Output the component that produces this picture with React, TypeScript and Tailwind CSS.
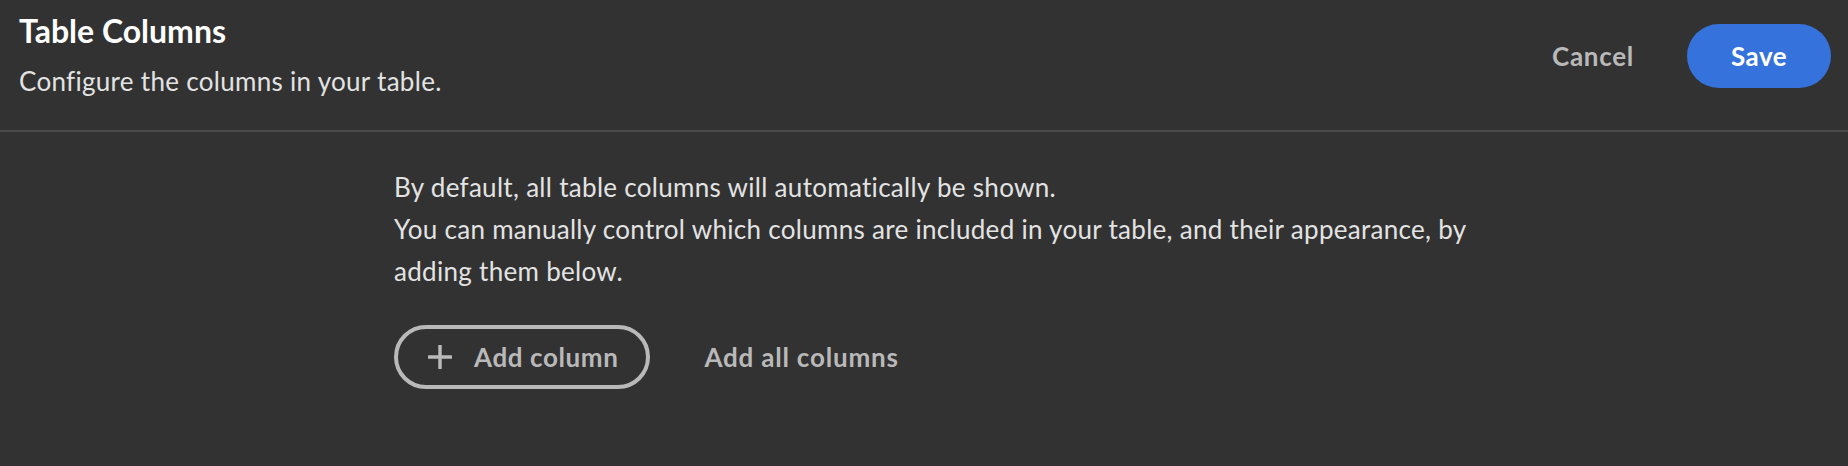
import React from 'react';

function PlusIcon() {
  return (
    <svg width="24" height="24" viewBox="0 0 24 24" fill="currentColor" aria-hidden="true">
      <rect x="10.25" y="0" width="3.5" height="24" rx="0.5" />
      <rect x="0" y="10.25" width="24" height="3.5" rx="0.5" />
    </svg>
  );
}

export default function App() {
  return (
    <div className="min-h-screen bg-[#323232] font-['Lato','Noto_Sans',sans-serif] text-[#e3e3e3]">
      <header className="flex h-[132px] items-start justify-between border-b-2 border-[#4a4a4a] pl-[19px] pr-[17px]">
        <div className="pt-[11px]">
          <h1 className="text-[32px] font-bold leading-[40px] text-white">Table Columns</h1>
          <p className="mt-[9px] text-[26px] leading-[42px] tracking-[0.3px] text-[#e3e3e3]">
            Configure the columns in your table.
          </p>
        </div>
        <div className="flex items-center gap-[22px] pt-[24px]">
          <button className="h-[64px] min-w-[144px] rounded-full border-4 border-transparent px-[24px] text-[26px] font-bold tracking-[0.7px] text-[#b9b9b9]">
            Cancel
          </button>
          <button className="h-[64px] min-w-[144px] rounded-full bg-[#3572dc] px-[28px] text-[26px] font-bold tracking-[0.5px] text-white">
            Save
          </button>
        </div>
      </header>

      <main className="mx-auto w-[1060px] pt-[34px]">
        <p className="whitespace-nowrap text-[26px] leading-[42px] tracking-[0.3px]">
          By default, all table columns will automatically be shown.
          <br />
          You can manually control which columns are included in your table, and their appearance, by
          <br />
          adding them below.
        </p>
        <div className="mt-[33px] flex items-center gap-6">
          <button className="flex h-[64px] items-center gap-[22px] rounded-full border-4 border-[#b9b9b9] pl-[30px] pr-[28px] text-[26px] font-bold tracking-[0.6px] text-[#b9b9b9]">
            <PlusIcon />
            <span>Add column</span>
          </button>
          <button className="h-[64px] rounded-full border-4 border-transparent pl-[26px] pr-[28px] text-[26px] font-bold tracking-[0.8px] text-[#b9b9b9]">
            Add all columns
          </button>
        </div>
      </main>
    </div>
  );
}
